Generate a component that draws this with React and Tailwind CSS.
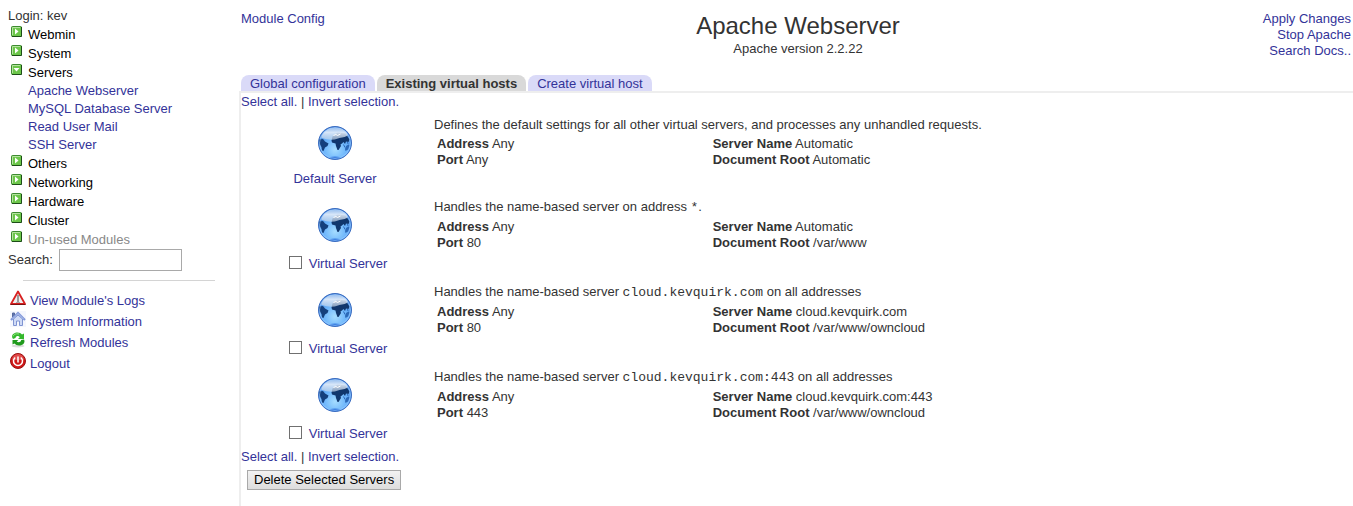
import React, { useState } from "react";

const categories = [
  { name: "Webmin", modules: [] },
  { name: "System", modules: [] },
  {
    name: "Servers",
    modules: ["Apache Webserver", "MySQL Database Server", "Read User Mail", "SSH Server"]
  },
  { name: "Others", modules: [] },
  { name: "Networking", modules: [] },
  { name: "Hardware", modules: [] },
  { name: "Cluster", modules: [] },
  { name: "Un-used Modules", modules: [], unused: true }
];

const tabs = ["Global configuration", "Existing virtual hosts", "Create virtual host"];

const servers = [
  {
    id: "default",
    label: "Default Server",
    description: "Defines the default settings for all other virtual servers, and processes any unhandled requests.",
    port: "Any",
    serverName: "Automatic",
    root: "Automatic"
  },
  {
    id: "any80",
    label: "Virtual Server",
    selectable: true,
    description: <>Handles the name-based server on address <Code>*</Code>.</>,
    port: "80",
    serverName: "Automatic",
    root: "/var/www"
  },
  {
    id: "cloud80",
    label: "Virtual Server",
    selectable: true,
    description: <>Handles the name-based server <Code>cloud.kevquirk.com</Code> on all addresses</>,
    port: "80",
    serverName: "cloud.kevquirk.com",
    root: "/var/www/owncloud"
  },
  {
    id: "cloud443",
    label: "Virtual Server",
    selectable: true,
    description: <>Handles the name-based server <Code>cloud.kevquirk.com:443</Code> on all addresses</>,
    port: "443",
    serverName: "cloud.kevquirk.com:443",
    root: "/var/www/owncloud"
  }
];

function Code({ children }) {
  return <code className="font-['Liberation_Mono',monospace] text-[13px]">{children}</code>;
}

function Link({ children, className = "", onClick }) {
  return (
    <a
      href="#"
      className={`text-[#333399] hover:underline ${className}`}
      onClick={e => {
        e.preventDefault();
        if (onClick) onClick();
      }}
    >
      {children}
    </a>
  );
}

const ArrowIcon = ({ open }) => (
  <svg width="11" height="11" viewBox="0 0 11 11" className="shrink-0" aria-hidden="true">
    <rect x="0.5" y="0.5" width="10" height="10" rx="1" fill="#6cc64a" stroke="#3d8a30" />
    <path d="M1.500 9V1.500H9" fill="none" stroke="#b4e39f" />
    <path d="M10.500 1v9.500H1" fill="none" stroke="#1d4d18" />
    {open ? <path d="M2.500 4h6l-3 3.500z" fill="#fff" /> : <path d="M4 2.500v6l3.500-3z" fill="#fff" />}
  </svg>
);

const WarningIcon = () => (
  <svg width="16" height="16" viewBox="0 0 16 16" aria-hidden="true">
    <path d="M8 1.500L15 14H1z" fill="#eee" stroke="#d82020" strokeWidth="1.800" strokeLinejoin="round" />
    <path d="M0.500 14.500h15" stroke="#7d1010" />
    <path d="M8 5v7" stroke="#999" strokeWidth="2" />
    <path d="M6 12.500h4" stroke="#aaa" />
  </svg>
);

const HomeIcon = () => (
  <svg width="16" height="16" viewBox="0 0 16 16" aria-hidden="true">
    <rect width="16" height="16" fill="#f5f7fd" />
    <path d="M2.500 6V2h2v3" fill="#6076a8" stroke="#5568a0" />
    <path d="M3.500 8v6.500h3V10h3v4.500h3V8L8 4z" fill="#cfdaf5" stroke="#7f94d2" />
    <path d="M1 9l7-7 7 7" fill="none" stroke="#7f96d8" strokeWidth="2" />
    <path d="M2.500 8L8 2.500 13.500 8" fill="none" stroke="#c3d0f3" strokeWidth="0.700" />
  </svg>
);

const RefreshIcon = () => (
  <svg width="16" height="16" viewBox="0 0 16 16" aria-hidden="true">
    <ellipse cx="8" cy="14" rx="6.500" ry="1.500" fill="#dcdcdc" />
    <path d="M2 5C2 2 4.500 0.500 7.500 0.500c2 0 3.500.7 4.500 2L14 1.500V7H8l1.800-1.800C8.500 3.500 6 3.800 5.500 6L3 7z" fill="#34b82c" />
    <path d="M14.500 9c0 3-2.500 4.500-5.500 4.500-2 0-3.500-.7-4.500-2L2.500 12.500V8h6l-1.800 1.500c1.500 1.200 4 1 4.500-1.500L14 7.500z" fill="#209a1c" />
    <path d="M3 4.500C3.500 2.500 6 1.200 9 2" fill="none" stroke="#8be278" />
  </svg>
);

const LogoutIcon = () => (
  <svg width="16" height="16" viewBox="0 0 16 16" aria-hidden="true">
    <circle cx="8" cy="8" r="7.500" fill="#cf1818" stroke="#9b1111" />
    <path d="M2 7a6 6 0 0 1 12 0z" fill="#ec7070" opacity="0.600" />
    <path d="M5.200 4.500a4.500 4.500 0 1 0 5.600 0" fill="none" stroke="#fff" strokeWidth="1.500" />
    <path d="M8 3.500v6" stroke="#fff" strokeWidth="1.500" />
  </svg>
);

const GlobeIcon = () => (
  <svg width="36" height="36" viewBox="0 0 36 36" aria-hidden="true">
    <defs>
      <radialGradient id="sea" cx="0.5" cy="0.7" r="0.7">
        <stop offset="0" stopColor="#a5dcff" />
        <stop offset="0.5" stopColor="#6bb4fb" />
        <stop offset="1" stopColor="#4382dc" />
      </radialGradient>
      <linearGradient id="gloss" x1="0" y1="0" x2="0" y2="1">
        <stop offset="0" stopColor="#a9c9f0" stopOpacity="0.8" />
        <stop offset="0.4" stopColor="#e6effa" stopOpacity="0.9" />
        <stop offset="1" stopColor="#c4d6ea" stopOpacity="0.65" />
      </linearGradient>
    </defs>
    <circle cx="18" cy="18" r="16.500" fill="url(#sea)" />
    {/* land */}
    <path d="M2 14.500l4-.5 2 2.500 3.500 2-1 2.500-2.500 1.500-1.500 3.500-1.500-.5-.5-3.500-2-3z" fill="#143f7c" />
    <path d="M14.500 15.500l1-4 5-4 8 1 4 6-1 2.500-2.500-.5-1 2.500-1.500-2-1.500 1.500-1.500 1 .5 1.500-2.500 4-1 0-1.500-4-.5-2.500-3.500-1z" fill="#10366c" />
    <path d="M29 21l2.500-1.500 1 1-1.500 4-2.500 1.500-.5-2z" fill="#2c69b8" />
    <path d="M26.500 19.500l1.500 3M30.500 17l.5 2" stroke="#2c69b8" />
    <path d="M12 32.500q6-2 12 0l-3 1.500h-6z" fill="#3b80e2" />
    {/* highlight */}
    <path d="M4 12.500C6.500 5.500 12 2.500 18 2.500c6 0 11 2.500 13 7.500-3 3-6 1.800-10 3.500-5 2-11 1.500-17-1z" fill="url(#gloss)" />
    <path d="M16.500 10.500l2.500-1 1.500 1 3-1.500" fill="none" stroke="#fff" />
    <circle cx="18" cy="18" r="15.500" fill="none" stroke="#a7d3ff" strokeOpacity="0.5" />
    <circle cx="18" cy="18" r="16.500" fill="none" stroke="#3a6cc0" />
  </svg>
);

const footerLinks = [
  { label: "View Module's Logs", Icon: WarningIcon },
  { label: "System Information", Icon: HomeIcon },
  { label: "Refresh Modules", Icon: RefreshIcon },
  { label: "Logout", Icon: LogoutIcon }
];

const Sidebar = () => {
  const [open, setOpen] = useState(["Servers"]);

  const toggleCategory = name => {
    setOpen(prev => (prev.includes(name) ? prev.filter(item => item !== name) : [...prev, name]));
  };

  return (
    <nav className="w-[239px] shrink-0 pl-2 pt-[7px]">
      <div className="leading-[18px]">Login: kev</div>
      {categories.map(category => (
        <div key={category.name}>
          <button
            type="button"
            aria-expanded={open.includes(category.name)}
            onClick={() => toggleCategory(category.name)}
            className={`flex gap-1.5 pl-[3px] leading-[19px] ${category.unused ? "text-[#888888]" : "text-black"}`}
          >
            <span className="pt-px">
              <ArrowIcon open={open.includes(category.name)} />
            </span>
            {category.name}
          </button>
          {open.includes(category.name) && category.modules.length > 0 && (
            <ul className="pl-5 leading-[18px]">
              {category.modules.map(module => (
                <li key={module}>
                  <Link>{module}</Link>
                </li>
              ))}
            </ul>
          )}
        </div>
      ))}
      <div className="flex h-[22px] items-center gap-1.5">
        <label htmlFor="search">Search:</label>
        <input id="search" type="text" className="h-[22px] w-[123px] border border-[#a9a9a9] bg-white px-1" />
      </div>
      <hr className="ml-[15px] mr-6 mt-[9px] border-[#d4d4d4]" />
      <ul className="mt-[9px] pl-0.5">
        {footerLinks.map(({ label, Icon }) => (
          <li key={label} className="flex h-[21px] gap-1 leading-[21px]">
            <Icon />
            <Link>{label}</Link>
          </li>
        ))}
      </ul>
    </nav>
  );
};

const ServerRow = ({ server, checked, onToggle }) => (
  <div className="flex">
    <div className="flex w-[188px] shrink-0 flex-col items-center pt-2">
      <GlobeIcon />
      {server.selectable ? (
        <div className="mt-[13px] flex gap-[7px] pl-1.5">
          <input
            type="checkbox"
            aria-label={`Select ${server.serverName} port ${server.port}`}
            checked={checked}
            onChange={() => onToggle(server.id)}
            className="size-[13px] appearance-none border border-[#707070] bg-white checked:bg-[#707070]"
          />
          <Link>{server.label}</Link>
        </div>
      ) : (
        <Link className="mt-2.5">{server.label}</Link>
      )}
    </div>
    <div className="min-w-0 flex-1 pl-[5px]">
      <p>{server.description}</p>
      <table className="mt-[3px] w-3/5 table-fixed">
        <tbody>
          <tr>
            <td className="pl-[3px]"><b>Address</b> Any</td>
            <td className="pl-[3px]"><b>Server Name</b> {server.serverName}</td>
          </tr>
          <tr>
            <td className="pl-[3px]"><b>Port</b> {server.port}</td>
            <td className="pl-[3px]"><b>Document Root</b> {server.root}</td>
          </tr>
        </tbody>
      </table>
    </div>
  </div>
);

const App = () => {
  const [activeTab, setActiveTab] = useState("Existing virtual hosts");
  const [selected, setSelected] = useState([]);

  const selectable = servers.filter(server => server.selectable).map(server => server.id);

  const toggleServer = id => {
    setSelected(prev => (prev.includes(id) ? prev.filter(item => item !== id) : [...prev, id]));
  };

  const selectionLinks = (
    <div>
      <Link onClick={() => setSelected(selectable)}>Select all.</Link>
      {" | "}
      <Link onClick={() => setSelected(selectable.filter(id => !selected.includes(id)))}>Invert selection.</Link>
    </div>
  );

  return (
    <div className="flex min-h-screen bg-white font-['Liberation_Sans',Arial,sans-serif] text-[13px] leading-4 text-[#333333]">
      <Sidebar />

      <main className="flex min-w-0 flex-1 flex-col">
        <header className="grid grid-cols-[1fr_auto_1fr] pl-1 pt-[11px]">
          <div className="-ml-0.5">
            <Link>Module Config</Link>
          </div>
          <div className="text-center">
            <h1 className="text-[24px] leading-[30px]">Apache Webserver</h1>
            <p>Apache version 2.2.22</p>
          </div>
          <div className="flex flex-col items-end pr-0.5">
            <Link>Apply Changes</Link>
            <Link>Stop Apache</Link>
            <Link>Search Docs..</Link>
          </div>
        </header>

        <div className="mt-4 flex gap-0.5 pl-0.5">
          {tabs.map(tab => (
            <button
              key={tab}
              type="button"
              onClick={() => setActiveTab(tab)}
              className={`h-4 rounded-t-lg px-[9px] pt-px leading-4 ${
                tab === activeTab ? "bg-[#d9d9d9] font-bold" : "bg-[#dadaf8] text-[#333399]"
              }`}
            >
              {tab}
            </button>
          ))}
        </div>

        {/* Virtual host list */}
        <section className="flex-1 border-l-2 border-t-2 border-[#eeeeee] pt-px">
          {selectionLinks}
          <div className="my-[7px] flex flex-col gap-3">
            {servers.map(server => (
              <ServerRow
                key={server.id}
                server={server}
                checked={selected.includes(server.id)}
                onToggle={toggleServer}
              />
            ))}
          </div>
          {selectionLinks}
          <button
            type="button"
            className="ml-1.5 mt-[5px] h-5 border border-[#a9a9a9] bg-linear-to-b from-[#f2f2f2] to-[#dddddd] px-1.5 leading-[18px] text-black"
          >
            Delete Selected Servers
          </button>
        </section>
      </main>
    </div>
  );
};

export default App;
